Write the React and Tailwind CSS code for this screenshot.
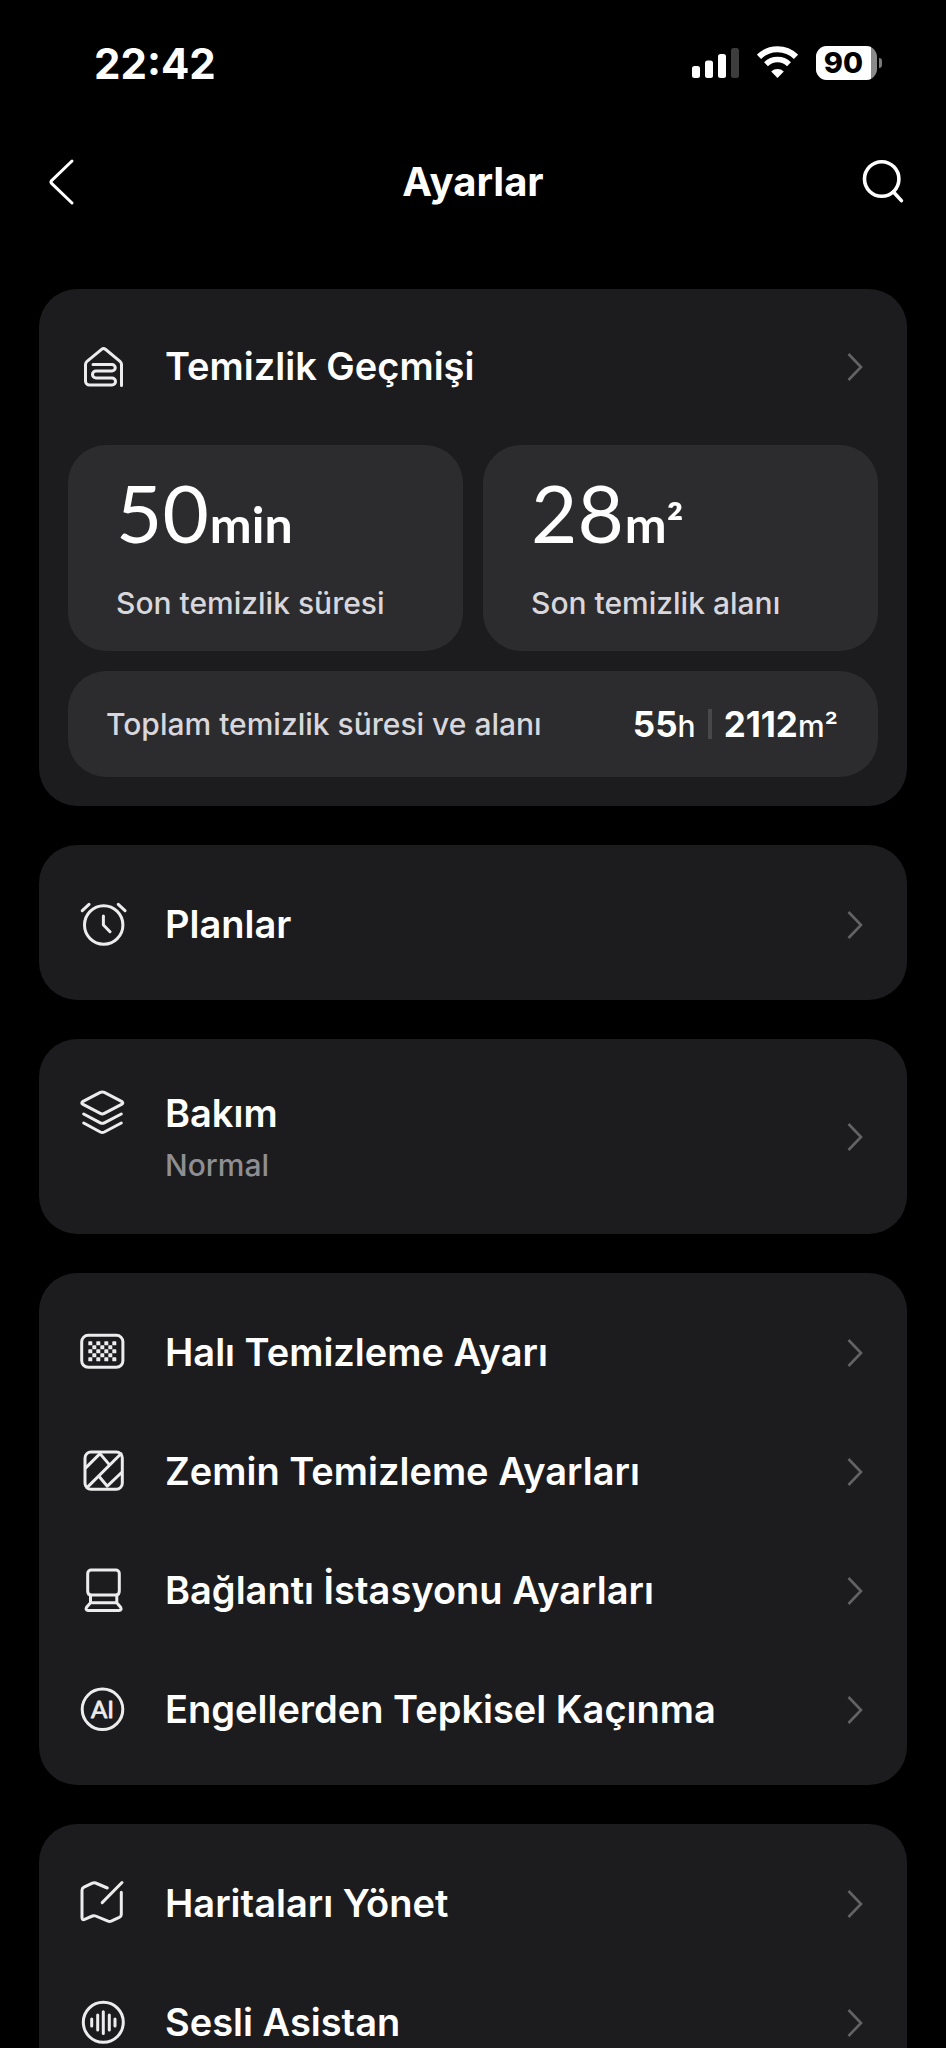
import React from "react";

function Icon({ children }) {
  return (
    <svg
      className="size-12 shrink-0 text-[#ececed]"
      viewBox="0 0 48 48"
      fill="none"
      stroke="currentColor"
      strokeWidth="3"
      strokeLinecap="round"
      strokeLinejoin="round"
      aria-hidden="true"
    >
      {children}
    </svg>
  );
}

function HomeIcon() {
  return (
    <Icon>
      <path d="M14 21.5H33a3.25 3.25 0 0 1 0 6.5H17a3.5 3.5 0 0 0 0 7H33a3.5 3.5 0 0 1 0 7H10.5a4 4 0 0 1-4-4V21.5q0-2 1.5-3.2L22.6 6.3q1.9-1.5 3.8 0L41 18.3q1.5 1.2 1.5 3.2V42.5" />
    </Icon>
  );
}

function ClockIcon() {
  return (
    <Icon>
      <circle cx="24.7" cy="24" r="19.2" />
      <path d="M3.3 9.7L10 3.4M39.3 3.4L46 9.7M24.4 15V24L31 30.7" />
    </Icon>
  );
}

function LayersIcon() {
  return (
    <Icon>
      <path d="M3.6 13.6L21.3 4.4q2-1 4 0L43 13.6q1.6 1.3 0 2.6L25.3 25.4q-2 1-4 0L3.6 16.2q-1.6-1.3 0-2.6z" />
      <path d="M4.7 26L21.3 34.8q2 1 4 0L42.3 26M4.7 35L21.3 44q2 1 4 0L42.3 35" />
    </Icon>
  );
}

function CarpetIcon() {
  const cells = [];
  for (let r = 0; r < 5; r++) {
    for (let c = r % 2; c < 7; c += 2) {
      cells.push(
        <rect
          key={`${r}-${c}`}
          x={9.3 + c * 4}
          y={12.3 + r * 4}
          width="4"
          height="4"
          rx="0.6"
          fill="currentColor"
          stroke="none"
        />
      );
    }
  }
  return (
    <Icon>
      <rect x="2.7" y="6.3" width="41.2" height="32" rx="6.5" />
      {cells}
    </Icon>
  );
}

function FloorIcon() {
  return (
    <Icon>
      <rect x="6" y="4" width="37.3" height="37.3" rx="6" />
      <path d="M7.2 19.4L21 5.6L30.3 16.6M42 5.8L8 39.6M19.7 28L28.3 38.2L42.6 24.5" />
    </Icon>
  );
}

function StationIcon() {
  return (
    <Icon>
      <path d="M12.2 3H36.8a3.5 3.5 0 0 1 3.5 3.5V24q0 4-3.5 4H12.2q-3.5 0-3.5-4V6.5A3.5 3.5 0 0 1 12.2 3z" />
      <path d="M11.5 28V35.7H37.8V28M11.5 35.7L7.6 40.2q-1.4 3.2 1.6 3.2H40q3 0 1.6-3.2L37.8 35.7" />
    </Icon>
  );
}

function AiIcon() {
  return (
    <Icon>
      <circle cx="23.5" cy="23.3" r="20.3" />
      <text
        x="23.5"
        y="32"
        textAnchor="middle"
        fill="currentColor"
        strokeWidth="0.8"
        className="font-['Lato',sans-serif] text-[24px]"
      >
        AI
      </text>
    </Icon>
  );
}

function MapIcon() {
  return (
    <Icon>
      <path d="M28.3 8L16.6 3q-1.6-.7-3.2.1L5 7.2Q3 8.2 3 10.2V37.6q0 2.8 2.6 1.8L13.4 36q1.6-.7 3.2 0L29 41.2q1.6.7 3.2 0L40.3 37.4q2-1 2-3V12.3" />
      <path d="M43 2.5L23.2 22.6" />
    </Icon>
  );
}

function VoiceIcon() {
  return (
    <Icon>
      <circle cx="24.3" cy="23.3" r="20" />
      <path d="M12.7 20V27M18.7 16V31M24.3 12.7V34.4M30.3 16V31M36 20V27" />
    </Icon>
  );
}

function Chevron() {
  return (
    <svg
      className="h-8 w-5 shrink-0 text-[#636366]"
      viewBox="0 0 20 32"
      fill="none"
      stroke="currentColor"
      strokeWidth="2.6"
      aria-hidden="true"
    >
      <path d="M4.5 3L17 16L4.5 29" />
    </svg>
  );
}

function StatusBar() {
  return (
    <div className="flex h-[126px] items-center justify-between pr-16 pl-[94px]">
      <span className="text-[42px] font-bold">22:42</span>
      <div className="flex items-center gap-[18px]">
        <svg className="h-[34px] w-[47px]" viewBox="0 0 47 34" fill="#fff" aria-hidden="true">
          <rect x="0" y="20" width="8" height="12" rx="2.5" />
          <rect x="13" y="14.5" width="8" height="17.5" rx="2.5" />
          <rect x="26" y="8" width="8" height="24" rx="2.5" />
          <rect x="39" y="2" width="8" height="30" rx="2.5" fill="#3d3d3d" />
        </svg>
        <svg className="h-[34px] w-[41px]" viewBox="0 0 41 34" fill="none" stroke="#fff" aria-hidden="true">
          <path d="M2 10.8A26.5 26.5 0 0 1 39 10.8" strokeWidth="6" />
          <path d="M9 18.2A16.5 16.5 0 0 1 32 18.2" strokeWidth="5.6" />
          <path d="M20.5 32L14.2 25.4A9.5 9.5 0 0 1 26.8 25.4z" fill="#fff" stroke="none" />
        </svg>
        <div className="flex items-center gap-[2px]">
          <div className="h-[34px] overflow-hidden rounded-[11px] bg-[#8a8a8a] pr-[6px]">
            <div className="flex h-full w-[55px] items-center justify-center bg-white text-[29px] font-extrabold text-black">
              90
            </div>
          </div>
          <div className="h-[10px] w-[3px] rounded-r-full bg-[#7a7a7a]"></div>
        </div>
      </div>
    </div>
  );
}

function Header() {
  return (
    <header className="grid h-28 grid-cols-[1fr_auto_1fr] items-center px-10">
      <button type="button" aria-label="Geri" className="justify-self-start p-2">
        <svg className="h-12 w-7" viewBox="0 0 28 48" fill="none" stroke="#fff" strokeWidth="3" strokeLinecap="round" strokeLinejoin="round">
          <path d="M24 3L3.6 22.6q-1.4 1.4 0 2.8L24 45" />
        </svg>
      </button>
      <h1 className="text-[40px] font-bold">Ayarlar</h1>
      <button type="button" aria-label="Ara" className="justify-self-end">
        <svg className="size-12" viewBox="0 0 48 48" fill="none" stroke="#fff" strokeWidth="3.6" strokeLinecap="round">
          <circle cx="23.7" cy="21" r="17.2" />
          <path d="M35.5 34L43.4 42.6" />
        </svg>
      </button>
    </header>
  );
}

function Card({ children }) {
  return <section className="rounded-[38px] bg-[#1c1c1e] pt-5 pb-4">{children}</section>;
}

function Row({ icon, title }) {
  return (
    <a href="#" className="flex h-[119px] items-center gap-[38px] pr-[43px] pl-10">
      {icon}
      <span className="grow text-[38px] font-semibold">{title}</span>
      <Chevron />
    </a>
  );
}

function Stat({ value, unit, label }) {
  return (
    <div className="flex flex-col rounded-[38px] bg-[#2c2c2e] px-12 pt-[22px] pb-7">
      <div className="flex items-baseline gap-px font-['Lato',sans-serif]">
        <span className="text-[80px] leading-[90px]">{value}</span>
        <span className="text-[50px] leading-none font-bold">{unit}</span>
      </div>
      <span className="mt-[26px] text-[30px] leading-10 font-medium text-[#d8d7dd]">{label}</span>
    </div>
  );
}

function App() {
  return (
    <div className="h-screen overflow-hidden bg-black font-['Inter',sans-serif] text-white">
      <StatusBar />
      <Header />
      <main className="flex flex-col gap-[39px] px-[39px] pt-[51px]">
        <section className="rounded-[38px] bg-[#1c1c1e] pt-[18px] pb-[29px]">
          <Row icon={<HomeIcon />} title="Temizlik Geçmişi" />
          <div className="mt-[19px] grid grid-cols-2 gap-5 px-[29px]">
            <Stat value="50" unit="min" label="Son temizlik süresi" />
            <Stat value="28" unit="m²" label="Son temizlik alanı" />
            <div className="col-span-2 flex h-[106px] items-center justify-between rounded-[38px] bg-[#2c2c2e] pr-10 pl-[38px]">
              <span className="text-[30px] font-medium text-[#d8d7dd]">
                Toplam temizlik süresi ve alanı
              </span>
              <div className="flex items-center gap-3 text-[30px] font-medium">
                <span>
                  <b className="text-[35px]">55</b>h
                </span>
                <span className="h-[30px] w-1 bg-[#48484a]"></span>
                <span>
                  <b className="text-[35px]">2112</b>m²
                </span>
              </div>
            </div>
          </div>
        </section>

        <Card>
          <Row icon={<ClockIcon />} title="Planlar" />
        </Card>

        <section className="rounded-[38px] bg-[#1c1c1e]">
          <a href="#" className="flex h-[195px] items-center gap-[38px] pr-[43px] pl-10">
            <div className="self-start pt-[49px]">
              <LayersIcon />
            </div>
            <div className="flex grow flex-col">
              <span className="text-[38px] leading-[56px] font-semibold">Bakım</span>
              <span className="text-[30px] leading-[48px] font-medium text-[#8e8e93]">Normal</span>
            </div>
            <Chevron />
          </a>
        </section>

        <Card>
          <Row icon={<CarpetIcon />} title="Halı Temizleme Ayarı" />
          <Row icon={<FloorIcon />} title="Zemin Temizleme Ayarları" />
          <Row icon={<StationIcon />} title="Bağlantı İstasyonu Ayarları" />
          <Row icon={<AiIcon />} title="Engellerden Tepkisel Kaçınma" />
        </Card>

        <Card>
          <Row icon={<MapIcon />} title="Haritaları Yönet" />
          <Row icon={<VoiceIcon />} title="Sesli Asistan" />
        </Card>
      </main>
    </div>
  );
}

export default App;
